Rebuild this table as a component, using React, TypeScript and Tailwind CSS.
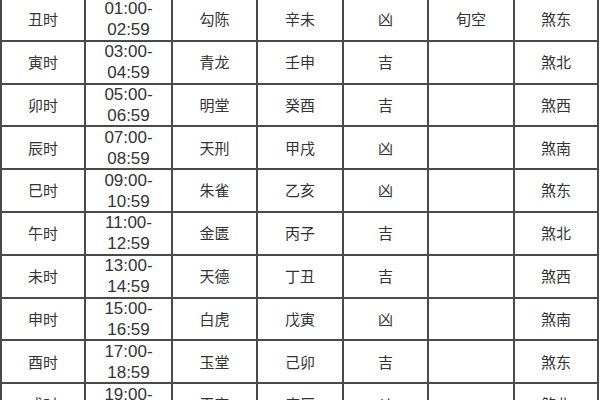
const rows = [
  ['丑时', '01:00-', '02:59', '勾陈', '辛未', '凶', '旬空', '煞东'],
  ['寅时', '03:00-', '04:59', '青龙', '壬申', '吉', '', '煞北'],
  ['卯时', '05:00-', '06:59', '明堂', '癸酉', '吉', '', '煞西'],
  ['辰时', '07:00-', '08:59', '天刑', '甲戌', '凶', '', '煞南'],
  ['巳时', '09:00-', '10:59', '朱雀', '乙亥', '凶', '', '煞东'],
  ['午时', '11:00-', '12:59', '金匮', '丙子', '吉', '', '煞北'],
  ['未时', '13:00-', '14:59', '天德', '丁丑', '吉', '', '煞西'],
  ['申时', '15:00-', '16:59', '白虎', '戊寅', '凶', '', '煞南'],
  ['酉时', '17:00-', '18:59', '玉堂', '己卯', '吉', '', '煞东'],
  ['戌时', '19:00-', '20:59', '天牢', '庚辰', '凶', '', '煞北'],
];

const cjk = "font-['Noto_Sans_CJK_SC',sans-serif]";

export default function App() {
  return (
    <div className="w-[600px] h-[400px] overflow-hidden bg-white">
      <div className="-mt-[3px] w-[599px] grid grid-cols-[82px_85px_83px_84px_83px_84px_82px] auto-rows-[40.8px] gap-[2px] p-[2px] bg-[#4a4a4a] text-[#333]">
        {rows.map((r) => (
          <div key={r[0]} className="contents">
            <div className={`bg-white flex items-center justify-center text-[15px] ${cjk}`}>{r[0]}</div>
            <div className="bg-white flex flex-col items-center justify-center font-['Liberation_Sans',sans-serif] text-[17px] leading-[21px]">
              <span>{r[1]}</span>
              <span>{r[2]}</span>
            </div>
            {r.slice(3).map((c, i) => (
              <div key={i} className={`bg-white flex items-center justify-center text-[15px] ${cjk}`}>{c}</div>
            ))}
          </div>
        ))}
      </div>
    </div>
  );
}
